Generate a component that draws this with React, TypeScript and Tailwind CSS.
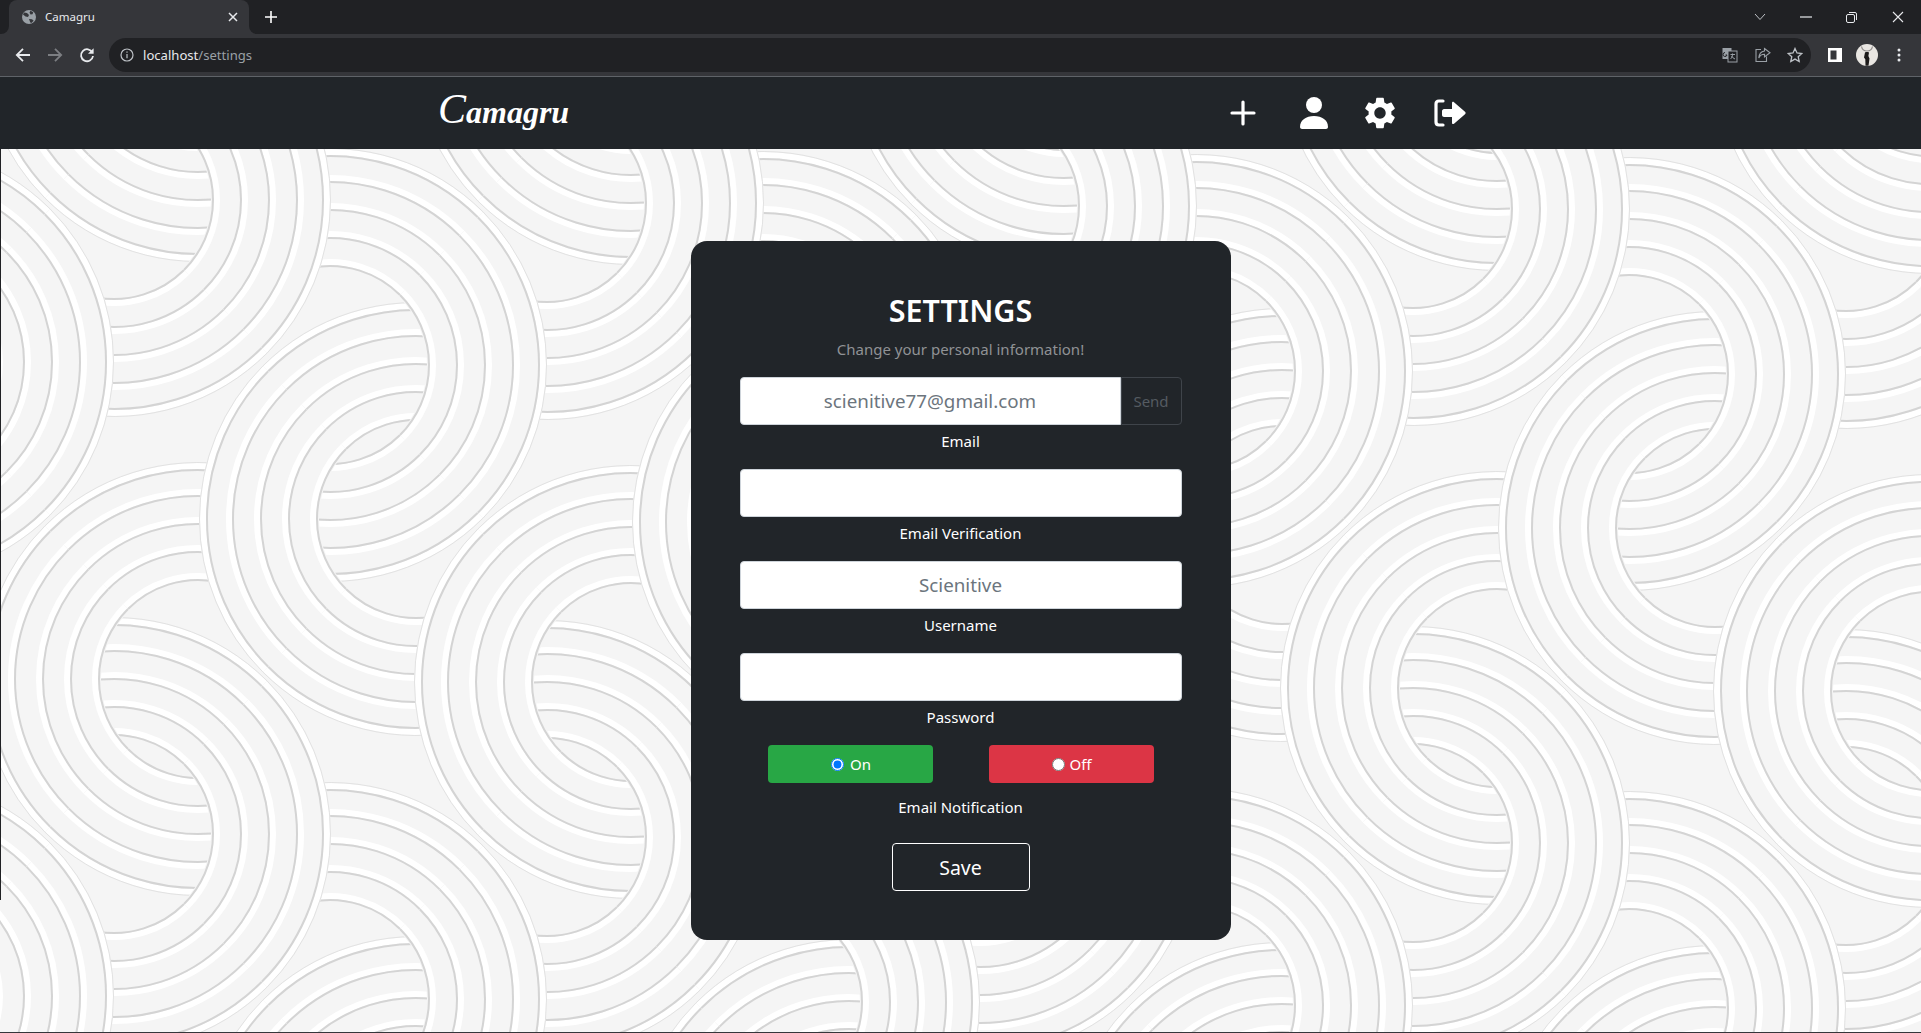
import { MdSettings } from "react-icons/md";

const RADII = [106, 134, 162, 190, 216];
const RIGHT_RINGS = [[114, 200], [330, 365]];
const LEFT_RINGS = [[198, 45], [416, 519]];
const COL = 433;
const ROW = 634;
const SLANT = 3;

function polar(r: number, deg: number) {
  const a = (deg * Math.PI) / 180;
  return `${(r * Math.cos(a)).toFixed(2)} ${(r * Math.sin(a)).toFixed(2)}`;
}

function arc(r: number, from: number, to: number) {
  return `M${polar(r, from)}A${r} ${r} 0 0 1 ${polar(r, to)}`;
}

function Sector({ from, to }: { from: number; to: number }) {
  const inner = RADII[0] - 9;
  const outer = RADII[4] + 1;
  return (
    <g fill="none">
      <path
        d={`M${polar(inner, from)}A${inner} ${inner} 0 0 1 ${polar(inner, to)}L${polar(outer, to)}A${outer} ${outer} 0 0 0 ${polar(outer, from)}Z`}
        fill="#f5f5f5"
      />
      {RADII.map((r) => (
        <g key={r}>
          <path d={arc(r - 3, from, to)} stroke="#ffffff" strokeWidth="6" />
          <path d={arc(r - 7, from, to)} stroke="#d4d4d4" strokeWidth="2" />
        </g>
      ))}
      <path d={arc(outer - 0.5, from, to)} stroke="#e2e2e2" strokeWidth="1" />
    </g>
  );
}

function Pattern() {
  const cols = [-1, 0, 1, 2, 3, 4, 5];
  const rows = [-1, 0, 1, 2];
  const place = (list: number[][], rotate: number, id: string) =>
    cols.flatMap((c) =>
      rows.flatMap((r) =>
        list.map(([x, y]) => (
          <use
            key={`${id}${c}${r}${x}`}
            href={`#${id}`}
            transform={`translate(${x + c * COL} ${y + r * ROW + c * SLANT}) rotate(${rotate})`}
          />
        )),
      ),
    );
  return (
    <svg className="absolute inset-0 h-full w-full bg-[#f5f5f5]" aria-hidden="true">
      <defs>
        <g id="ends">
          <Sector from={-100} to={-45} />
          <Sector from={45} to={100} />
        </g>
        <g id="mid">
          <Sector from={-45} to={45} />
        </g>
      </defs>
      <g transform="translate(0 -149)">
        {place(RIGHT_RINGS, 0, "ends")}
        {place(LEFT_RINGS, 180, "ends")}
        {place(RIGHT_RINGS, 0, "mid")}
        {place(LEFT_RINGS, 180, "mid")}
      </g>
    </svg>
  );
}

function TabBar() {
  return (
    <div className="flex h-[34px] items-center bg-[#202124] pl-[9px]">
      <div className="relative flex h-[34px] w-[240px] items-center rounded-t-lg bg-[#35363a] pl-3 text-[11.500px] text-[#e8eaed]">
        <span className="absolute bottom-0 -left-2 h-2 w-2 bg-[#35363a]">
          <span className="block h-2 w-2 rounded-br-lg bg-[#202124]" />
        </span>
        <span className="absolute -right-2 bottom-0 h-2 w-2 bg-[#35363a]">
          <span className="block h-2 w-2 rounded-bl-lg bg-[#202124]" />
        </span>
        <svg width="16" height="16" viewBox="0 0 16 16">
          <circle cx="8" cy="8" r="7" fill="#9aa0a6" />
          <path d="M3 3.500l3 .5 2 2-1 2-2.500-.5L2 5.500zM9.500 1.800l2.800 1.400-.8 2-2 .3-1-2zM8 10l3 .2 1.700 1.500L10 14.300l-1-1.500z" fill="#35363a" />
        </svg>
        <span className="ml-2 font-['Noto_Sans',sans-serif]">Camagru</span>
        <svg className="ml-auto mr-[11px]" width="10" height="10" viewBox="0 0 10 10" stroke="#e8eaed" strokeWidth="1.500">
          <path d="M1 1l8 8M9 1l-8 8" />
        </svg>
      </div>
      <svg className="ml-[16px]" width="12" height="12" viewBox="0 0 12 12" stroke="#ffffff" strokeWidth="1.600">
        <path d="M6 0v12M0 6h12" />
      </svg>
      <div className="ml-auto flex items-center">
        <svg width="12" height="8" viewBox="0 0 12 8" fill="none" stroke="#bdc1c6" strokeWidth="1">
          <path d="M1 1l5 5.500L11 1" />
        </svg>
        <svg className="ml-[34px]" width="12" height="2" viewBox="0 0 12 2" stroke="#e8eaed" strokeWidth="1.200">
          <path d="M0 1h12" />
        </svg>
        <svg className="ml-[34px]" width="11" height="11" viewBox="0 0 11 11" fill="none" stroke="#e8eaed" strokeWidth="1">
          <rect x="0.500" y="2.500" width="8" height="8" rx="1.500" />
          <path d="M3 .5h6a1.500 1.500 0 0 1 1.500 1.500v6" />
        </svg>
        <svg className="ml-[35px] mr-[17px]" width="12" height="12" viewBox="0 0 12 12" stroke="#e8eaed" strokeWidth="1.100">
          <path d="M1 1l10 10M11 1L1 11" />
        </svg>
      </div>
    </div>
  );
}

function Toolbar() {
  return (
    <div className="flex h-[42px] items-center bg-[#35363a]">
      <svg className="ml-[15px]" width="16" height="16" viewBox="0 0 16 16" fill="none" stroke="#e8eaed" strokeWidth="1.800">
        <path d="M15 8H2M8 1.800L1.800 8 8 14.200" />
      </svg>
      <svg className="ml-[16px]" width="16" height="16" viewBox="0 0 16 16" fill="none" stroke="#7c7e82" strokeWidth="1.800">
        <path d="M1 8h13M8 1.800L14.200 8 8 14.200" />
      </svg>
      <svg className="ml-[16px]" width="16" height="16" viewBox="0 0 16 16" fill="none">
        <path d="M13.400 5.500A6 6 0 1 0 14 9" stroke="#e8eaed" strokeWidth="1.800" />
        <path d="M14.600 1.200v5.600H9z" fill="#e8eaed" />
      </svg>
      <div className="ml-[14px] flex h-[34px] w-[1702px] items-center rounded-full bg-[#202124] pl-[11px] pr-[8px]">
        <svg width="14" height="14" viewBox="0 0 14 14" fill="none" stroke="#bdc1c6" strokeWidth="1.200">
          <circle cx="7" cy="7" r="6" />
          <path d="M7 6v4.200M7 3.500v1.300" />
        </svg>
        <span className="ml-[9px] translate-y-px font-['Noto_Sans',sans-serif] text-[13.100px] text-[#e8eaed]">
          localhost<span className="text-[#9aa0a6]">/settings</span>
        </span>
        <svg className="ml-auto" width="16" height="16" viewBox="0 0 16 16" fill="none">
          <rect x="0.500" y="1" width="9" height="11" fill="#9aa0a6" />
          <rect x="6" y="4" width="9" height="11" stroke="#9aa0a6" fill="#202124" />
          <path d="M3 5.500a2 2 0 1 0 2 2.500H3.500" stroke="#202124" />
          <path d="M8.500 7.500h4.500M10.500 6.500v1c0 2-1 3.500-2 4.500M9.500 9c1 1.500 2 2.500 3.500 3" stroke="#9aa0a6" />
        </svg>
        <svg className="ml-[17px]" width="16" height="16" viewBox="0 0 16 16" fill="none" stroke="#9aa0a6" strokeWidth="1.100">
          <path d="M6 2.500H1v12h10.500v-5M9.500 1.500l5.500 4.200-5.500 4.200V7.300C7 7.300 5 8.200 3.800 11 4 7.200 6 4.500 9.500 4z" />
        </svg>
        <svg className="ml-[16px]" width="16" height="16" viewBox="0 0 16 16" fill="none" stroke="#bdc1c6" strokeWidth="1.300">
          <path d="M8 1.500l2 4.500 4.800.5-3.600 3.200 1 4.800L8 12.100l-4.200 2.400 1-4.800L1.200 6.500 6 6z" />
        </svg>
      </div>
      <svg className="ml-[17px]" width="14" height="14" viewBox="0 0 14 14">
        <path d="M0 0h14v14H0zM2.500 2.500v9h6v-9z" fill="#ffffff" fillRule="evenodd" />
      </svg>
      <svg className="ml-[14px]" width="22" height="22" viewBox="0 0 22 22">
        <circle cx="11" cy="11" r="11" fill="#e9e6e2" />
        <path d="M5.500 2.500c.5 2.500 2.500 4.500 5.500 4.500s5-2 5.500-4.500" fill="none" stroke="#8d8a88" strokeWidth="1.200" />
        <path d="M9 8.500c1.300-.6 2.700-.6 4 0l-.6 3.500 1.100 2.500-1 7.300H9.500l-.2-6.500-1.300-1.800z" fill="#1c1a1a" />
      </svg>
      <svg className="ml-[19px]" width="4" height="14" viewBox="0 0 4 14" fill="#e8eaed">
        <circle cx="2" cy="2" r="1.500" />
        <circle cx="2" cy="7" r="1.500" />
        <circle cx="2" cy="12" r="1.500" />
      </svg>
    </div>
  );
}

function Nav() {
  return (
    <nav className="flex h-[72px] items-center bg-[#212529] pl-[438px] text-white">
      <span className="mb-2 w-[132px] whitespace-nowrap font-['Liberation_Serif',serif] text-[32px] font-bold italic leading-none">
        <span className="text-[42px] font-normal">C</span>amagru
      </span>
      <svg className="ml-[660px]" width="26" height="26" viewBox="0 0 26 26" stroke="#fff" strokeWidth="3.200" strokeLinecap="round">
        <path d="M13 2v22M2 13h22" />
      </svg>
      <svg className="ml-[44px]" width="28" height="32" viewBox="0 0 28 32" fill="#fff">
        <ellipse cx="14" cy="8" rx="8" ry="8" />
        <path d="M0 30c0-7 6-11 14-11s14 4 14 11c0 1-1 2-2 2H2c-1 0-2-1-2-2z" />
      </svg>
      <MdSettings className="ml-[33px]" size={38} />
      <svg className="ml-[35px]" width="32" height="28" viewBox="0 0 32 28">
        <path d="M9 2H5C3 2 2 3 2 5v18c0 2 1 3 3 3h4" fill="none" stroke="#fff" strokeWidth="3.200" strokeLinecap="round" />
        <path d="M10 10h8V4c0-1 1-1.500 2-.8l11 9.500c.8.7.8 1.800 0 2.500l-11 9.500c-1 .7-2 .2-2-.8v-6h-8c-1 0-2-1-2-2v-4c0-1 1-2 2-2z" fill="#fff" />
      </svg>
    </nav>
  );
}

function Field({ label, placeholder }: { label: string; placeholder?: string }) {
  return (
    <div className="mb-4 w-full">
      <input
        readOnly
        placeholder={placeholder}
        className="h-12 w-full rounded border border-[#ced4da] bg-white px-4 text-center text-[18.800px] placeholder:text-[#6c757d]"
      />
      <p className="mt-1 h-6 text-[15px] leading-6 text-white">{label}</p>
    </div>
  );
}

function SettingsCard() {
  return (
    <div className="relative mx-auto mt-[92px] flex h-[699px] w-[540px] flex-col items-center rounded-2xl bg-[#212529] px-[49px] pt-[49px] text-center font-['Noto_Sans',sans-serif]">
      <h1 className="h-10 text-[30.500px] font-semibold leading-10 text-white">SETTINGS</h1>
      <p className="mt-[7px] mb-4 h-6 text-[15px] leading-6 text-[#909295]">Change your personal information!</p>

      <div className="mb-4 w-full">
        <div className="flex">
          <input
            readOnly
            placeholder="scienitive77@gmail.com"
            className="h-12 min-w-0 flex-1 rounded-l border border-[#ced4da] bg-white px-4 text-center text-[18.800px] placeholder:text-[#6c757d]"
          />
          <button className="h-12 w-[61px] rounded-r border border-[#3f444a] text-[15px] text-[#555b61]">Send</button>
        </div>
        <p className="mt-1 h-6 text-[15px] leading-6 text-white">Email</p>
      </div>
      <Field label="Email Verification" />
      <Field label="Username" placeholder="Scienitive" />
      <Field label="Password" />

      <div className="flex w-full">
        <div className="flex-1 px-7">
          <label className="flex h-[38px] items-center justify-center rounded bg-[#28a745] pl-[2px] text-[15px] text-white">
            <input type="radio" name="notif" defaultChecked className="mr-[6px]" />
            On
          </label>
        </div>
        <div className="flex-1 px-7">
          <label className="flex h-[38px] items-center justify-center rounded bg-[#dc3545] pl-[2px] text-[15px] text-white">
            <input type="radio" name="notif" className="mr-[4px]" />
            Off
          </label>
        </div>
      </div>
      <p className="mt-[12px] h-6 text-[15px] leading-6 text-white">Email Notification</p>
      <button className="mt-[24px] h-12 w-[138px] rounded border border-white pt-px text-[19.500px] text-white">Save</button>
    </div>
  );
}

export default function App() {
  return (
    <div className="flex h-[1033px] flex-col overflow-hidden">
      <TabBar />
      <Toolbar />
      <div className="h-px bg-[#5f6368]" />
      <Nav />
      <main className="relative flex-1 overflow-hidden">
        <Pattern />
        <SettingsCard />
        <span className="absolute top-0 left-0 h-[751px] w-px bg-[#202124]" />
        <span className="absolute right-0 bottom-0 left-0 h-px bg-[#35363a]" />
      </main>
    </div>
  );
}
